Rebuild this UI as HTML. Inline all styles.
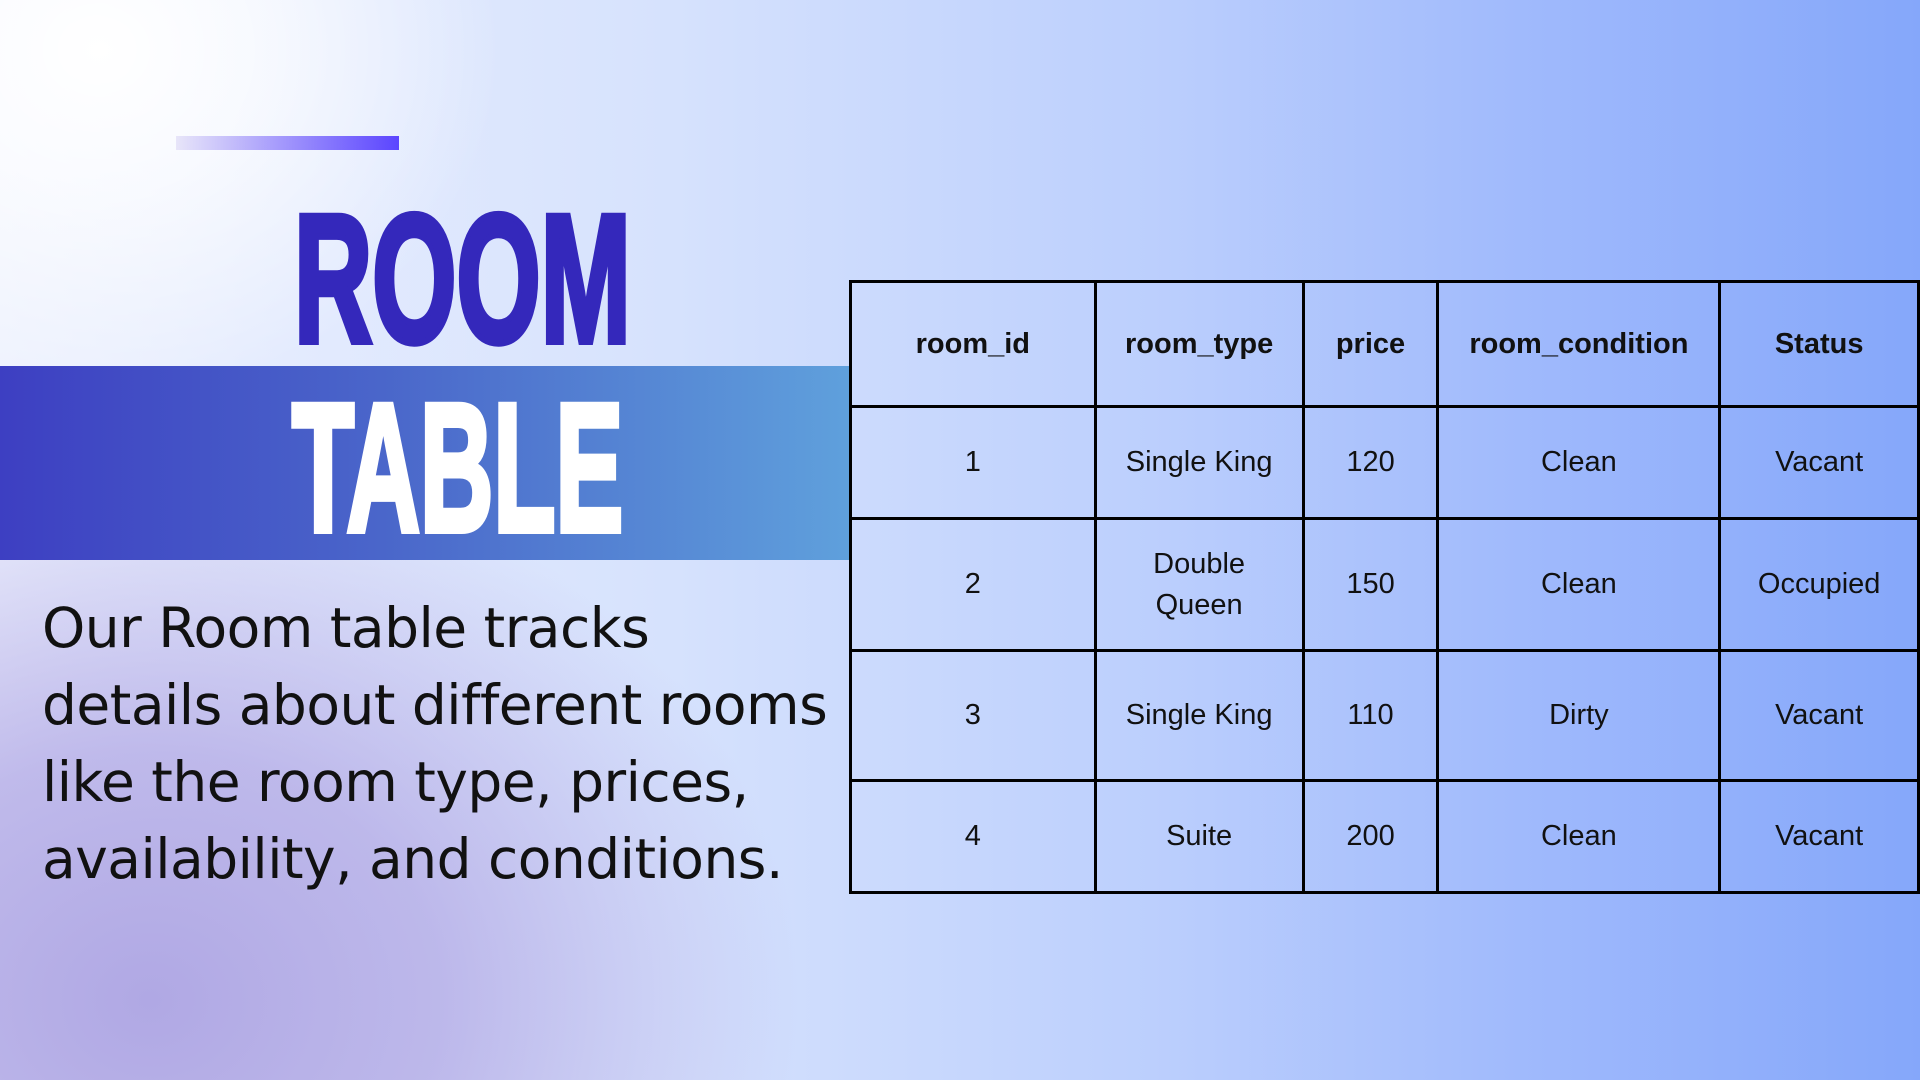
<!DOCTYPE html>
<html><head><meta charset="utf-8"><style>
*{margin:0;padding:0;box-sizing:border-box}
html,body{width:1920px;height:1080px;overflow:hidden}
#w{width:1920px;height:1080px;overflow:hidden;position:relative;font-family:"Liberation Sans",sans-serif;
background:radial-gradient(650px 550px at 150px 1000px,#b0a8e4 0%,rgba(180,172,230,.8) 45%,rgba(190,185,235,0) 100%),
radial-gradient(400px 350px at 100px 50px,#ffffff 0%,rgba(255,255,255,.7) 40%,rgba(255,255,255,0) 100%),
linear-gradient(90deg,#eef2fe 0%,#d6e2fd 35%,#bccffd 60%,#9fb9fc 80%,#85a7fa 100%);}
.bar{position:absolute;left:176px;top:136px;width:223px;height:14px;background:linear-gradient(90deg,rgba(220,215,245,.6),#5b45ff);}
.band{position:absolute;left:0;top:366px;width:849px;height:194px;background:linear-gradient(90deg,#3d3fc2,#4a66ca 45%,#5fa0dc);}
.t{position:absolute;font-weight:bold;font-size:190px;line-height:1;transform-origin:0 0;letter-spacing:0}
.p{position:absolute;left:42px;top:590px;font-family:"DejaVu Sans",sans-serif;font-size:55px;line-height:77px;color:#111;letter-spacing:-0.5px;white-space:nowrap}
table{position:absolute;left:849px;top:280px;border-collapse:collapse;font-family:"Liberation Sans",sans-serif;}
td{border:3px solid #000;text-align:center;font-size:29px;color:#111;padding:0;line-height:41px}
tr.h td{font-weight:bold}
</style></head><body><div id="w">
<div class="bar"></div>
<div class="band"></div>
<div class="t" style="left:294px;top:188px;color:#3428bb;-webkit-text-stroke:7px #3428bb;transform:scaleX(.57) scaleY(.96)">ROOM</div>
<div class="t" style="left:292px;top:377px;color:#fff;-webkit-text-stroke:7px #fff;transform:scaleX(.535) scaleY(.96)">TABLE</div>
<div class="p">Our Room table tracks<br>details about different rooms<br>like the room type, prices,<br>availability, and conditions.</div>
<table>
<tr class="h" style="height:125px"><td style="width:247px">room_id</td><td style="width:209px">room_type</td><td style="width:136px">price</td><td style="width:283px">room_condition</td><td style="width:200px">Status</td></tr>
<tr style="height:112px"><td>1</td><td>Single King</td><td>120</td><td>Clean</td><td>Vacant</td></tr>
<tr style="height:132px"><td>2</td><td>Double<br>Queen</td><td>150</td><td>Clean</td><td>Occupied</td></tr>
<tr style="height:130px"><td>3</td><td>Single King</td><td>110</td><td>Dirty</td><td>Vacant</td></tr>
<tr style="height:112px"><td>4</td><td>Suite</td><td>200</td><td>Clean</td><td>Vacant</td></tr>
</table>
</div></body></html>
